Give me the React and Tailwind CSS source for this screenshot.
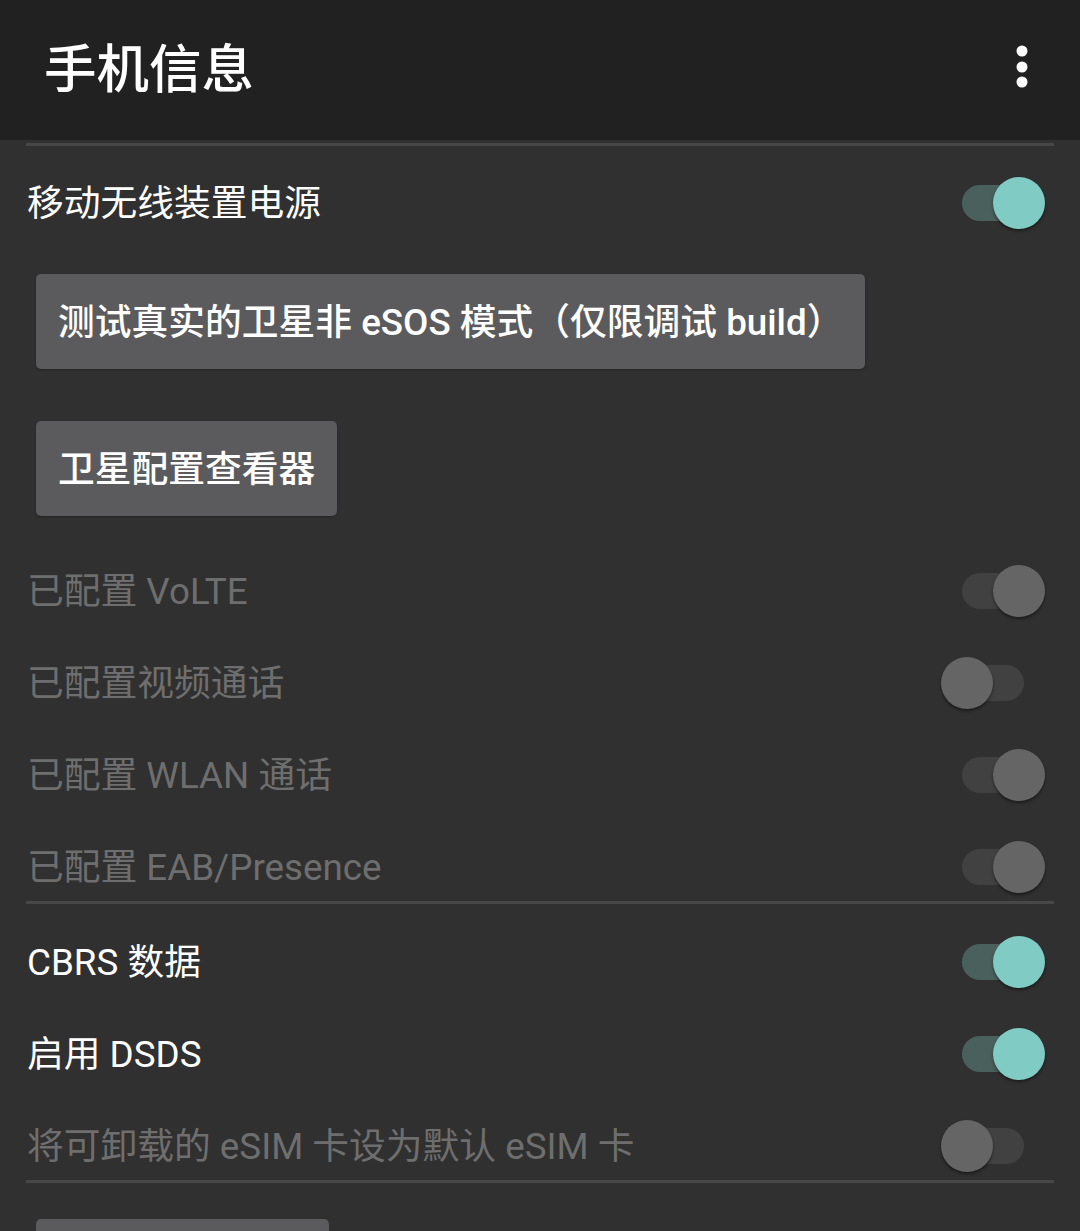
import React from 'react';

const font = { fontFamily: 'Roboto, "Noto Sans CJK SC", sans-serif' };

// Android-style switch: track with a round thumb hanging past its ends
const Switch = ({ on, disabled }) => {
  const track = disabled ? 'bg-[#414141]' : on ? 'bg-[#4a605d]' : 'bg-[#5a5a5a]';
  const thumb = disabled ? 'bg-[#656565]' : on ? 'bg-[#80cbc4]' : 'bg-[#ececec]';
  return (
    <div className="relative w-[104px] h-[52px] shrink-0">
      <div className={`absolute left-[21px] top-[8px] w-[62px] h-[36px] rounded-full ${track}`} />
      <div
        className={`absolute top-0 w-[52px] h-[52px] rounded-full shadow-[0_2px_3px_rgba(0,0,0,0.45)] ${thumb} ${
          on ? 'left-[52px]' : 'left-0'
        }`}
      />
    </div>
  );
};

const Row = ({ label, on, disabled, className = '' }) => (
  <div className={`flex items-center justify-between h-[68px] pl-[27px] pr-[35px] ${className}`}>
    <span className={`pt-[3px] text-[36.75px] leading-none ${disabled ? 'text-[#6e6e6e]' : 'text-white'}`}>{label}</span>
    <Switch on={on} disabled={disabled} />
  </div>
);

const Divider = ({ className = '' }) => <div className={`mx-[26px] h-[3px] bg-[#474747] ${className}`} />;

const Button = ({ children, className = '' }) => (
  <div className={`ml-[36px] ${className}`}>
    <div className="inline-flex items-center h-[95px] px-[22px] pt-[4px] rounded-[5px] bg-[#5b5b5d] text-white font-medium text-[36.75px] leading-none shadow-[0_1px_2px_rgba(0,0,0,0.25)]">
      {children}
    </div>
  </div>
);

export default function App() {
  return (
    <div className="h-[1231px] overflow-hidden bg-[#303030]" style={font}>
      {/* Toolbar */}
      <div className="flex items-center justify-between h-[140px] bg-[#212121] pl-[44px] pr-[52px]">
        <h1 className="text-white text-[52.5px] font-medium leading-none">手机信息</h1>
        <svg width="12" height="44" viewBox="0 0 12 44" className="fill-white mb-[6px]">
          <circle cx="6" cy="6" r="5.5" />
          <circle cx="6" cy="22" r="5.5" />
          <circle cx="6" cy="37" r="5.5" />
        </svg>
      </div>

      <Divider className="mt-[3px]" />
      <Row label="移动无线装置电源" on className="mt-[23px]" />

      <Button className="mt-[37px]">测试真实的卫星非 eSOS 模式（仅限调试 build）</Button>
      <Button className="mt-[52px]">卫星配置查看器</Button>

      <div className="mt-[41px] flex flex-col gap-[24px]">
        <Row label="已配置 VoLTE" on disabled />
        <Row label="已配置视频通话" disabled />
        <Row label="已配置 WLAN 通话" on disabled />
        <Row label="已配置 EAB/Presence" on disabled />
      </div>

      <Divider />

      <div className="mt-[24px] flex flex-col gap-[24px]">
        <Row label="CBRS 数据" on />
        <Row label="启用 DSDS" on />
        <Row label="将可卸载的 eSIM 卡设为默认 eSIM 卡" disabled />
      </div>

      <Divider />

      <div className="ml-[36px] mt-[36px] w-[293px] h-[95px] rounded-[5px] bg-[#5b5b5d]" />
    </div>
  );
}
